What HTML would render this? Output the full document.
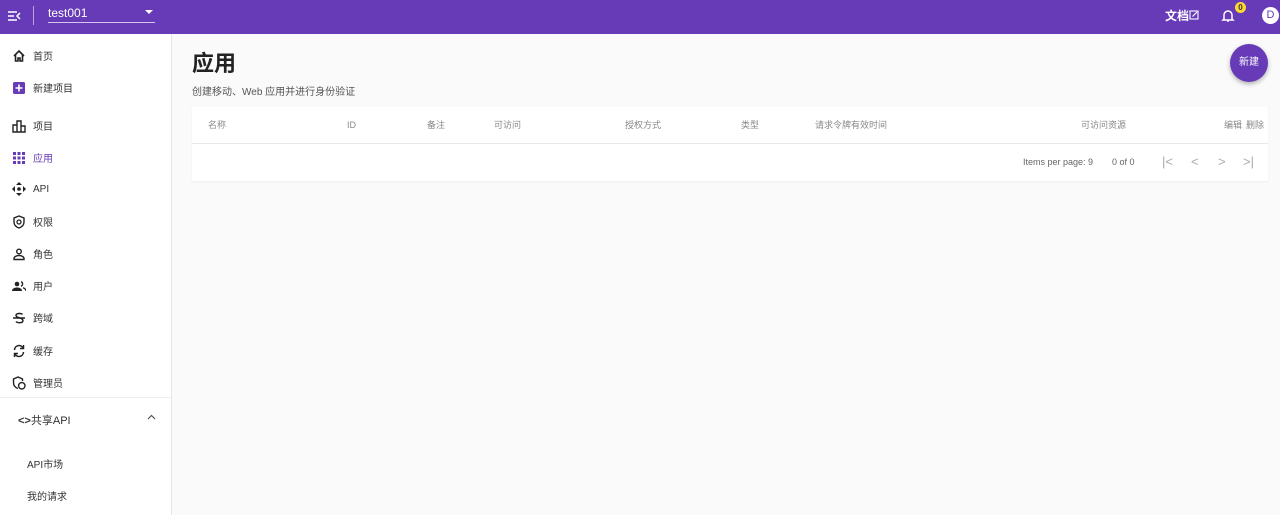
<!DOCTYPE html>
<html><head><meta charset="utf-8"><style>
*{box-sizing:border-box;margin:0;padding:0}
body{width:1280px;height:515px;overflow:hidden;background:#fafafa;font-family:"Liberation Sans","Noto Sans CJK SC",sans-serif;color:#333;position:relative}
.top{position:absolute;left:0;top:0;width:1280px;height:34px;background:#673ab7;color:#fff}
.side{position:absolute;left:0;top:34px;width:172px;height:481px;background:#fff;border-right:1px solid #e6e6e6}
.it{position:absolute;left:12px;font-size:10px;color:#333;display:flex;align-items:center}
.it svg{width:14px;height:14px;margin-right:7px}
.abs{position:absolute}
.th{position:absolute;top:119px;font-size:9px;line-height:12px;color:#888}
</style></head><body>
<div class="top">
 <svg class="abs" style="left:7px;top:9px" width="14" height="14" viewBox="0 0 14 14"><path d="M1 3h9M1 7h6M1 11h9M13 4l-3 3 3 3" stroke="#fff" stroke-width="1.5" fill="none"/></svg>
 <div class="abs" style="left:33px;top:6px;width:1px;height:19px;background:#b9a3e0"></div>
 <div class="abs" style="left:48px;top:6px;font-size:12px">test001</div>
 <div class="abs" style="left:48px;top:22px;width:107px;height:1px;background:#d4c6ee"></div>
 <div class="abs" style="left:145px;top:10px;width:0;height:0;border-left:4px solid transparent;border-right:4px solid transparent;border-top:4px solid #fff"></div>
 <div class="abs" style="left:1165px;top:7px;font-size:12px;font-weight:bold">文档</div>
 <svg class="abs" style="left:1189px;top:10px" width="10" height="10" viewBox="0 0 10 10"><rect x="1" y="1" width="8" height="8" stroke="#fff" stroke-width="1.1" fill="none"/><path d="M3.5 6.5L8 2" stroke="#fff" stroke-width="1.2"/></svg>
 <svg class="abs" style="left:1221px;top:9px" width="14" height="14" viewBox="0 0 14 14"><path d="M3 10V6a4 4 0 018 0v4l1 1H2zM6 12h2" stroke="#fff" stroke-width="1.5" fill="none"/></svg>
 <div class="abs" style="left:1235px;top:2px;width:11px;height:11px;border-radius:50%;background:#fdd835;color:#333;font-size:8px;text-align:center;line-height:11px;font-weight:bold">0</div>
 <div class="abs" style="left:1262px;top:7px;width:17px;height:17px;border-radius:50%;background:#fff;color:#673ab7;font-size:11px;text-align:center;line-height:17px">D</div>
</div>
<div class="side">
 <div class="it" style="top:14px"><svg viewBox="0 0 14 14"><path d="M2 7L7 2l5 5M3.5 6v6h2.5V9h2v3h2.5V6" stroke="#222" stroke-width="1.6" fill="none"/></svg>首页</div>
 <div class="it" style="top:46px"><svg viewBox="0 0 14 14"><rect x="1" y="1" width="12" height="12" rx="1.5" fill="#673ab7"/><path d="M7 3.5v7M3.5 7h7" stroke="#fff" stroke-width="1.6"/></svg>新建项目</div>
 <div class="it" style="top:84px"><svg viewBox="0 0 14 14"><path d="M1 13V6h4V2h4v5h4v6zM5 6v7M9 7v6" stroke="#222" stroke-width="1.4" fill="none"/></svg>项目</div>
 <div class="it" style="top:116px;color:#673ab7"><svg viewBox="0 0 14 14" fill="#673ab7"><rect x="1" y="1" width="3" height="3"/><rect x="5.5" y="1" width="3" height="3"/><rect x="10" y="1" width="3" height="3"/><rect x="1" y="5.5" width="3" height="3"/><rect x="5.5" y="5.5" width="3" height="3"/><rect x="10" y="5.5" width="3" height="3"/><rect x="1" y="10" width="3" height="3"/><rect x="5.5" y="10" width="3" height="3"/><rect x="10" y="10" width="3" height="3"/></svg>应用</div>
 <div class="it" style="top:148px"><svg viewBox="0 0 14 14" fill="#222"><path d="M7 0l3 3H4zM7 14l3-3H4zM0 7l3-3v6zM14 7l-3-3v6z"/><circle cx="7" cy="7" r="1.8"/></svg>API</div>
 <div class="it" style="top:180px"><svg viewBox="0 0 14 14"><path d="M7 1l5 2v4c0 3-2 5-5 6-3-1-5-3-5-6V3z" stroke="#222" stroke-width="1.4" fill="none"/><circle cx="7" cy="7" r="2" stroke="#222" stroke-width="1.3" fill="none"/></svg>权限</div>
 <div class="it" style="top:212px"><svg viewBox="0 0 14 14"><circle cx="7" cy="4.5" r="2.3" stroke="#222" stroke-width="1.4" fill="none"/><path d="M2 12.5v-1c0-2 3-3 5-3s5 1 5 3v1z" stroke="#222" stroke-width="1.4" fill="none"/></svg>角色</div>
 <div class="it" style="top:244px"><svg viewBox="0 0 14 14" fill="#222"><circle cx="5" cy="5" r="2.3"/><path d="M0 12c0-2.5 2.5-3.5 5-3.5s5 1 5 3.5z"/><path d="M9 2.8a2.3 2.3 0 010 4.4M11 8.8c1.5.5 3 1.3 3 3.2" stroke="#222" stroke-width="1.3" fill="none"/></svg>用户</div>
 <div class="it" style="top:276px"><svg viewBox="0 0 14 14"><path d="M10.5 3.5C9.5 2 4 2 4 4.5s7 2 7 5-6 2.5-7 1M1 7h12" stroke="#222" stroke-width="1.5" fill="none"/></svg>跨域</div>
 <div class="it" style="top:309px"><svg viewBox="0 0 14 14"><path d="M2.5 6A4.5 4.5 0 0111 4M11.5 8A4.5 4.5 0 013 10" stroke="#222" stroke-width="1.5" fill="none"/><path d="M11.5 1v3.5H8M2.5 13V9.5H6" stroke="#222" stroke-width="1.5" fill="none"/></svg>缓存</div>
 <div class="it" style="top:341px"><svg viewBox="0 0 14 14"><path d="M6 12.5C3 11.5 1.5 9.5 1.5 6.5V3L6 1l4.5 2v2" stroke="#222" stroke-width="1.4" fill="none"/><circle cx="9.8" cy="9.8" r="3.2" stroke="#222" stroke-width="1.4" fill="none"/></svg>管理员</div>
 <div class="abs" style="left:0;top:363px;width:171px;height:1px;background:#eee"></div>
 <div class="abs" style="left:18px;top:378px;font-size:11px;color:#333"><b style="font-weight:bold">&lt;&gt;</b>共享API</div>
 <svg class="abs" style="left:147px;top:380px" width="9" height="6" viewBox="0 0 9 6"><path d="M1 5l3.5-3.5L8 5" stroke="#555" stroke-width="1.2" fill="none"/></svg>
 <div class="abs" style="left:27px;top:422px;font-size:10px">API市场</div>
 <div class="abs" style="left:27px;top:454px;font-size:10px">我的请求</div>
</div>
<div class="abs" style="left:192px;top:46px;font-size:22px;font-weight:bold;color:#222">应用</div>
<div class="abs" style="left:192px;top:83px;font-size:10px;color:#555">创建移动、Web 应用并进行身份验证</div>
<div class="abs" style="left:1230px;top:44px;width:38px;height:38px;border-radius:50%;background:#673ab7;color:#fff;font-size:10px;text-align:center;line-height:38px;box-shadow:0 2px 5px rgba(0,0,0,.3)">新建</div>
<div class="abs" style="left:192px;top:107px;width:1076px;height:74px;background:#fff;box-shadow:0 1px 2px rgba(0,0,0,.05)"></div>
<div class="abs" style="left:192px;top:143px;width:1076px;height:1px;background:#e8e8e8"></div>
<div class="th" style="left:208px">名称</div>
<div class="th" style="left:347px">ID</div>
<div class="th" style="left:427px">备注</div>
<div class="th" style="left:494px">可访问</div>
<div class="th" style="left:625px">授权方式</div>
<div class="th" style="left:741px">类型</div>
<div class="th" style="left:815px">请求令牌有效时间</div>
<div class="th" style="left:1081px">可访问资源</div>
<div class="th" style="left:1224px">编辑</div>
<div class="th" style="left:1246px">删除</div>
<div class="abs" style="left:1023px;top:157px;font-size:9px;color:#666">Items per page: 9</div>
<div class="abs" style="left:1112px;top:157px;font-size:9px;color:#666">0 of 0</div>
<div class="abs" style="left:1162px;top:154px;font-size:13px;color:#aaa">|&lt;</div>
<div class="abs" style="left:1191px;top:154px;font-size:13px;color:#aaa">&lt;</div>
<div class="abs" style="left:1218px;top:154px;font-size:13px;color:#aaa">&gt;</div>
<div class="abs" style="left:1243px;top:154px;font-size:13px;color:#aaa">&gt;|</div>
</body></html>
